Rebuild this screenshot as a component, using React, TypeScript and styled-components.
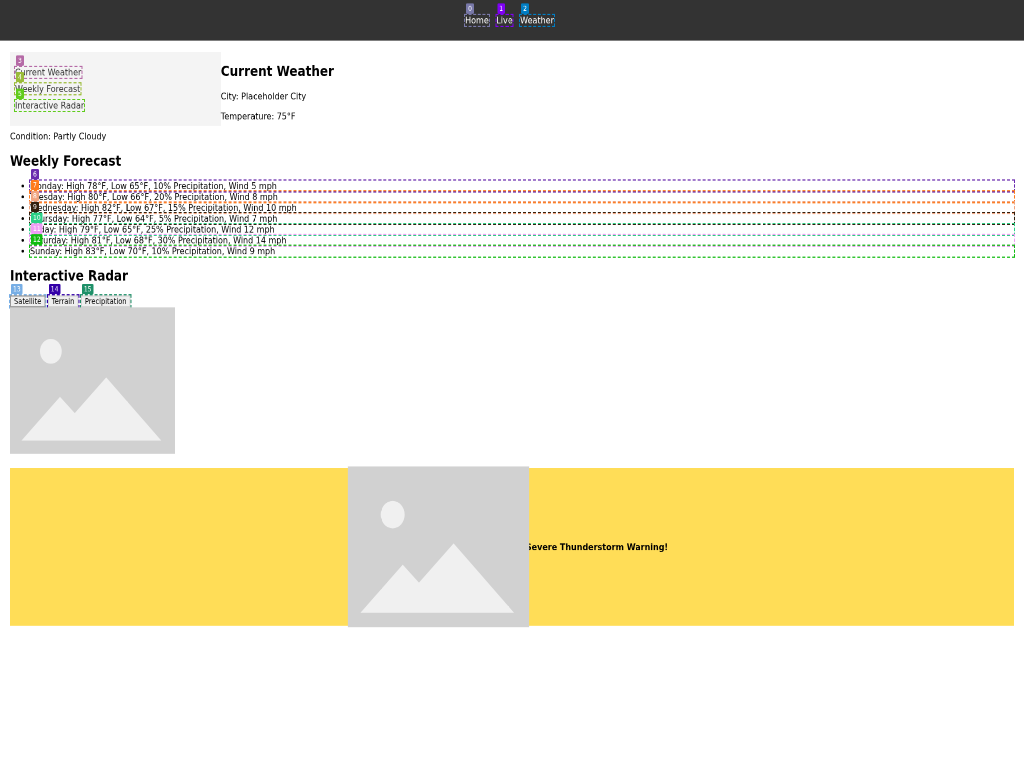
import React from "react";
import styled, { createGlobalStyle } from "styled-components";

const GlobalStyle = createGlobalStyle`
  body {
    margin: 0;
    background: #fff;
  }
`;

const Viewport = styled.div`
  width: 1024px;
  height: 768px;
  overflow: hidden;
`;

const Page = styled.div`
  width: 2048px;
  height: 1344px;
  transform: scale(0.5, 0.5714);
  transform-origin: 0 0;
  will-change: transform;
  background: #fff;
  color: #000;
  font-family: "DejaVu Sans", sans-serif;
  font-size: 16px;
  line-height: 19px;
`;

const Header = styled.header`
  display: flow-root;
  padding: 10px;
  background: #333;
  text-align: center;
`;

const NavList = styled.ul`
  margin: 16px 0;
  padding: 0;
  list-style: none;
`;

const NavItem = styled.li`
  display: inline;
  margin-right: 10px;
  color: #fff;
`;

const Main = styled.main`
  padding: 20px;
`;

const Sidebar = styled.aside`
  float: left;
  width: 20%;
  padding: 10px;
  background: #f4f4f4;
  color: #333;
`;

const SideList = styled.ul`
  margin: 16px 0;
  padding: 0;
  list-style: none;
`;

const SideItem = styled.li`
  & + & {
    margin-top: 10px;
  }
`;

const Title = styled.h2`
  margin: 20px 0;
  font-size: 24px;
  line-height: 28px;
  font-weight: bold;
`;

const Text = styled.p`
  margin: 16px 0;
`;

const ForecastList = styled.ul`
  margin: 20px 0;
  padding-left: 40px;
`;

const Marked = styled.span<{ $color: string; $block?: boolean }>`
  position: relative;
  display: ${(p) => (p.$block ? "block" : "inline-block")};
  vertical-align: top;
  outline: 2px dashed ${(p) => p.$color};
`;

const Tag = styled.span<{ $color: string }>`
  position: absolute;
  z-index: 2;
  left: 2px;
  top: -20px;
  height: 18px;
  padding: 0 4px;
  border-radius: 2px;
  background: ${(p) => p.$color};
  color: #fff;
  font-size: 12px;
  line-height: 18px;
`;

const LayerBar = styled.div`
  display: flex;
  gap: 5px;
  height: 21px;
`;

const LayerButton = styled.button<{ $edge: string }>`
  display: block;
  height: 21px;
  padding: 0 6px;
  border: 2px solid ${(p) => p.$edge};
  background: #efefef;
  color: #000;
  font-family: "DejaVu Sans", sans-serif;
  font-size: 13.333px;
  line-height: 16px;
`;

const Picture = styled.svg<{ $zoom?: number }>`
  display: block;
  flex: none;
  width: 330px;
  height: 256px;
  transform: scale(${(p) => p.$zoom ?? 1});
`;

const Alert = styled.div`
  display: flex;
  align-items: center;
  justify-content: center;
  gap: 10px;
  margin-top: 25px;
  padding: 10px;
  background: #ffdd57;
  font-weight: bold;
`;

const Placeholder = ({ zoom }: { zoom?: number }) => (
  <Picture $zoom={zoom} viewBox="0 0 330 256">
    <rect width="330" height="256" fill="#d1d1d1" />
    <circle cx="81.7" cy="76.8" r="21.8" fill="#f0f0f0" />
    <path d="M23 233 L100 156.5 L129.500 185 L192.500 122.500 L302.500 233 Z" fill="#f0f0f0" />
  </Picture>
);

type MarkProps = { id: number; color: string; block?: boolean; children: React.ReactNode };

const Mark = ({ id, color, block, children }: MarkProps) => (
  <Marked $color={color} $block={block}>
    {children}
    <Tag $color={color}>{id}</Tag>
  </Marked>
);

const nav = [
  ["Home", "#7878a8"],
  ["Live", "#7f00f5"],
  ["Weather", "#007dc3"],
];
const side = [
  ["Current Weather", "#b56aa6"],
  ["Weekly Forecast", "#9abb38"],
  ["Interactive Radar", "#60cc1c"],
];
const forecast = [
  ["Monday: High 78°F, Low 65°F, 10% Precipitation, Wind 5 mph", "#6a2aae"],
  ["Tuesday: High 80°F, Low 66°F, 20% Precipitation, Wind 8 mph", "#ff7b1c"],
  ["Wednesday: High 82°F, Low 67°F, 15% Precipitation, Wind 10 mph", "#f0a480"],
  ["Thursday: High 77°F, Low 64°F, 5% Precipitation, Wind 7 mph", "#33200e"],
  ["Friday: High 79°F, Low 65°F, 25% Precipitation, Wind 12 mph", "#2ad085"],
  ["Saturday: High 81°F, Low 68°F, 30% Precipitation, Wind 14 mph", "#ee9cf5"],
  ["Sunday: High 83°F, Low 70°F, 10% Precipitation, Wind 9 mph", "#10bb10"],
];
const layers = [
  ["Satellite", "#77aee5", "#989898"],
  ["Terrain", "#3300a8", "#d2d2d2"],
  ["Precipitation", "#1e9068", "#d2d2d2"],
];

export default function App() {
  return (
    <Viewport>
      <GlobalStyle />
      <Page>
        <Header>
          <NavList>
            {nav.map(([label, color], i) => (
              <React.Fragment key={label}>
                <NavItem>
                  <Mark id={i} color={color}>{label}</Mark>
                </NavItem>{" "}
              </React.Fragment>
            ))}
          </NavList>
        </Header>
        <Main>
          <Sidebar>
            <SideList>
              {side.map(([label, color], i) => (
                <SideItem key={label}>
                  <Mark id={i + 3} color={color}>{label}</Mark>
                </SideItem>
              ))}
            </SideList>
          </Sidebar>
          <section>
            <Title>Current Weather</Title>
            <Text>City: Placeholder City</Text>
            <Text>Temperature: 75°F</Text>
            <Text>Condition: Partly Cloudy</Text>
          </section>
          <section>
            <Title>Weekly Forecast</Title>
            <ForecastList>
              {forecast.map(([label, color], i) => (
                <li key={label}>
                  <Mark id={i + 6} color={color} block>{label}</Mark>
                </li>
              ))}
            </ForecastList>
          </section>
          <section>
            <Title>Interactive Radar</Title>
            <LayerBar>
              {layers.map(([label, color, edge], i) => (
                <Mark key={label} id={i + 13} color={color}>
                  <LayerButton $edge={edge}>{label}</LayerButton>
                </Mark>
              ))}
            </LayerBar>
            <Placeholder />
          </section>
          <Alert>
            <Placeholder zoom={1.1} />
            <span>Severe Thunderstorm Warning!</span>
          </Alert>
        </Main>
      </Page>
    </Viewport>
  );
}
